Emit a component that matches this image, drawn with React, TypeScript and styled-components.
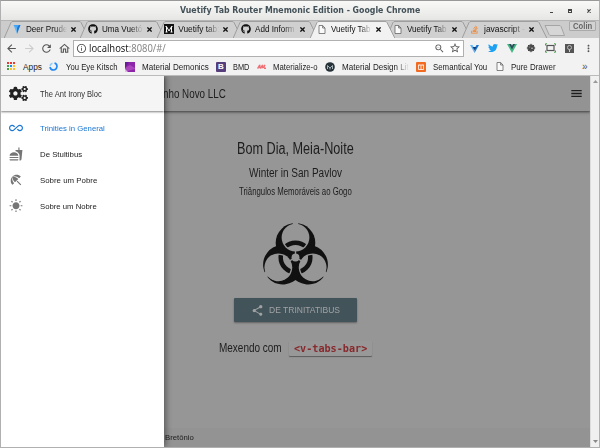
import React, { useLayoutEffect, useRef, useState } from 'react';
import styled, { createGlobalStyle } from 'styled-components';
import { FaCogs, FaGithub, FaStackOverflow, FaTwitter } from 'react-icons/fa';
import {
  MdAllInclusive, MdArrowBack, MdArrowForward, MdBeachAccess, MdFastfood, MdInfoOutline,
  MdMoreVert, MdOutlineHome, MdRefresh, MdShare, MdStarBorder, MdWbSunny, MdZoomOut,
} from 'react-icons/md';

const Global = createGlobalStyle`
  * { box-sizing: border-box; }
  body { margin: 0; overflow: hidden; font-family: "Liberation Sans", sans-serif; }
  svg { display: block; flex: none; }
`;

const FitBox = styled.span<{ $w: number }>`
  display: block; flex: none; width: ${p => p.$w}px; white-space: nowrap;
`;
const FitInner = styled.span`
  display: inline-block; transform-origin: 0 50%;
`;

/* Condenses or expands a line of text to a given width. */
function Fit({ w, children }: { w: number; children: React.ReactNode }) {
  const ref = useRef<HTMLSpanElement>(null);
  const [scale, setScale] = useState(1);
  useLayoutEffect(() => {
    if (ref.current) setScale(w / ref.current.offsetWidth);
  }, [w]);
  return (
    <FitBox $w={w}>
      <FitInner ref={ref} style={{ transform: `scaleX(${scale})` }}>{children}</FitInner>
    </FitBox>
  );
}

const Window = styled.div`
  width: 600px; height: 448px; display: flex; flex-direction: column;
  border: 1px solid #b0b0b0; border-top-color: #999; background: #f2f2f2;
`;
const TitleBar = styled.header`
  height: 19px; flex: none; display: flex; align-items: center; padding: 0 8px 0 179px;
  background: linear-gradient(#f9f9f8, #e6e6e4); color: #435158;
  font: bold 8px "DejaVu Sans", sans-serif;
`;
const WindowButtons = styled.div`
  margin-left: auto; display: flex; align-items: center; gap: 15px; color: #444;
`;
const Minimise = styled.i`width: 3px; height: 1px; margin-top: 3px; background: #444;`;
const Maximise = styled.i`width: 4px; height: 4px; border: 1px solid #444; border-top-width: 2px;`;

const TabStrip = styled.nav`
  height: 18px; flex: none; display: flex; padding-left: 3px; background: #cccccc; border-top: 1px solid #b5b5b5;
`;
const TabBox = styled.div<{ $active?: boolean }>`
  width: 76.4px; height: 17px; flex: none; display: grid; z-index: ${p => (p.$active ? 2 : 1)};
  > * { grid-area: 1 / 1; }
`;
const TabContent = styled.div`
  display: flex; align-items: center; padding: 0 0 1px 7.5px; z-index: 1; color: #111; font-size: 8.3px;
`;
const Favicon = styled.span`width: 10px; height: 10px; margin-right: 4px; display: grid; place-items: center; flex: none;`;
const TabLabel = styled.span`
  width: 42px; margin: -1px 3px 0 0; overflow: hidden; flex: none;
  mask-image: linear-gradient(90deg, #000 68%, transparent 98%);
`;
const NewTab = styled.svg`margin: 4px 0 0 5px;`;
const Profile = styled.div`
  margin: 0 3px 0 auto; width: 27px; height: 10px; border: 1px solid #aaa; border-radius: 1px;
  display: flex; justify-content: center; align-items: center; background: #d2d2d2; color: #666;
  font-size: 8.5px; font-weight: bold;
`;

const Toolbar = styled.div`
  height: 19px; flex: none; display: flex; align-items: center; padding: 1px 5px 0 4px; color: #555;
`;
const NavIcons = styled.div`width: 68px; display: flex; gap: 4.5px;`;
const Omnibox = styled.div`
  width: 391px; height: 17px; display: flex; align-items: center; gap: 2px; padding: 0 2px;
  border: 1px solid #b0b0b0; background: #fff; color: #555; font-size: 10.5px; margin-right: 6px;
  font-family: "Noto Sans", sans-serif;
`;
const Url = styled.span`color: #222; em { font-style: normal; color: #888; }`;
const OmniEnd = styled.div`margin-left: auto; display: flex; align-items: center; gap: 4px;`;
const Extensions = styled.div`flex: 1; display: flex; align-items: center; justify-content: space-between;`;

const Bookmarks = styled.div`
  height: 19px; flex: none; display: grid; align-items: center; padding: 1px 0 0 6px;
  grid-template-columns: 42px 76px 91px 41px 68px 91px 80px 86px auto;
  border-bottom: 1px solid #bbb; color: #222; font-size: 8.3px;
`;
const Bookmark = styled.div`display: flex; align-items: center;`;
const BookmarkIcon = styled.span<{ $w: number }>`width: ${p => p.$w}px; height: 10px; flex: none; display: flex; align-items: center;`;
const Faded = styled.span`mask-image: linear-gradient(90deg, #000 80%, transparent);`;
const Overflow = styled.span`color: #555; font-size: 10px;`;
const Square = styled.i<{ $bg: string }>`
  width: 10px; height: 10px; border-radius: 1px; background: ${p => p.$bg}; color: #fff;
  font: bold 8px/10px "Liberation Sans", sans-serif; text-align: center;
`;

const Viewport = styled.div`flex: 1; min-height: 0; display: grid; grid-template-columns: 1fr 9px;`;
const Page = styled.main`
  position: relative; overflow: hidden; display: flex; flex-direction: column; background: #969696; color: #1d1d1d;
`;
const AppBar = styled.div`
  height: 35px; flex: none; display: flex; align-items: center; justify-content: space-between;
  padding: 0 8px 0 162px; background: #939393; font-size: 12px;
  box-shadow: 0 1px 2px rgba(0,0,0,.45), 0 2px 3px rgba(0,0,0,.15);
`;
const Content = styled.section`flex: 1; display: flex; flex-direction: column; align-items: center; padding-top: 25px;`;
const Heading = styled.h1<{ $size: number; $h: number }>`
  margin: 0; font-weight: 400; font-size: ${p => p.$size}px; height: ${p => p.$h}px; line-height: ${p => p.$h}px;
`;
const HazardSvg = styled.svg`margin-top: 25px;`;
const Cta = styled.button`
  width: 123px; height: 24px; margin-top: 13px; padding: 0 0 0 17px; display: flex; flex: none; align-items: center; gap: 5px;
  border: 0; border-radius: 1px; background: #43535a; color: #a0a3a4; font: 9px "Liberation Sans", sans-serif;
  box-shadow: 0 1px 2px rgba(0,0,0,.35);
`;
const Mixing = styled.p`
  margin: 19px 0 0; display: flex; align-items: center; gap: 7px; font-size: 12.5px; line-height: 15px;
`;
const Code = styled.code`
  width: 83px; height: 15px; padding-left: 5px; border-radius: 1px; background: #989898; color: #87292d;
  font: bold 10px/16px "DejaVu Sans Mono", monospace; box-shadow: 0 1px 1px rgba(0,0,0,.4);
`;
const Footer = styled.footer`
  height: 19px; flex: none; padding-left: 163.5px; display: flex; align-items: center; background: #939393; font-size: 8px;
`;
const Drawer = styled.aside`
  position: absolute; left: 0; top: 0; bottom: 0; width: 162.5px; background: #fff;
  box-shadow: 2px 0 6px rgba(0,0,0,.4);
`;
const DrawerHead = styled.div`
  height: 35px; display: flex; align-items: center; padding-left: 8px; gap: 12px; background: #f5f5f5;
  color: #333; font-size: 9.5px; box-shadow: 0 1px 2px rgba(0,0,0,.5);
  svg { color: #222; }
`;
const Items = styled.ul`margin: 0; padding: 4px 0 0; list-style: none;`;
const Item = styled.li<{ $active?: boolean }>`
  height: 26px; display: flex; align-items: center; gap: 17px; padding-left: 8px; font-size: 8px;
  color: ${p => (p.$active ? '#1976d2' : '#222')};
  svg { color: ${p => (p.$active ? '#1976d2' : '#757575')}; }
`;
const Scrollbar = styled.div`
  display: flex; flex-direction: column; justify-content: space-between; align-items: center;
  padding: 4px 0; background: #f0f0f0; border-left: 1px solid #ddd;
`;

const Cross = ({ size = 5, weight = 1.3 }: { size?: number; weight?: number }) => (
  <svg width={size} height={size} viewBox="0 0 5 5" stroke="currentColor" strokeWidth={weight}>
    <path d="M.4.4l4.200 4.200M4.600.4L.4 4.600" />
  </svg>
);
const MenuBars = () => (
  <svg width="11" height="9" viewBox="0 0 11 9" stroke="#1d1d1d" strokeWidth="1.300">
    <path d="M.3 1.700h10.400M.3 4.500h10.400M.3 7.300h10.400" />
  </svg>
);

/* Three crescents around a pierced centre, with an interrupted ring. */
const spokes = [0, 120, 240];
const Biohazard = () => (
  <HazardSvg width="65" height="62" viewBox="-24.6 -26 49.2 46.8" fill="#111">
    <defs>
      <mask id="crescents" maskUnits="userSpaceOnUse" x="-30" y="-30" width="60" height="60">
        <rect x="-30" y="-30" width="60" height="60" fill="#fff" />
        {spokes.map(a => (
          <g key={a} transform={`rotate(${a})`}>
            <circle cy="-15" r="10.5" fill="#000" />
            <rect x="-2" y="-28" width="4" height="8" fill="#000" />
            <rect x="-.5" y="-7" width="1" height="7" fill="#000" />
          </g>
        ))}
        <circle r="3" fill="#000" />
      </mask>
      <clipPath id="openings">
        {spokes.map(a => <circle key={a} cy="-15" r="9.5" transform={`rotate(${a})`} />)}
      </clipPath>
    </defs>
    <g mask="url(#crescents)">
      {spokes.map(a => <circle key={a} cy="-11" r="15" transform={`rotate(${a})`} />)}
    </g>
    <g clipPath="url(#openings)"><circle r="11.2" fill="none" stroke="#111" strokeWidth="3.4" /></g>
  </HazardSvg>
);

const PageIcon = () => (
  <svg width="8" height="9" viewBox="0 0 8 9" fill="#fafafa" stroke="#666" strokeWidth=".8">
    <path d="M1 .5h3.6L7 3v5.5H1zM4.6.5V3H7" />
  </svg>
);
const VuetifyIcon = ({ ext }: { ext?: boolean }) => ext ? (
  <svg width="9" height="9" viewBox="0 0 9 9">
    <path d="M0 1h2.500l2 3.500V9z" fill="#64b5f6" /><path d="M9 1H6.500l-2 3.500V9z" fill="#1976d2" /><path d="M2.500 3h4l-2 3z" fill="#123f75" />
  </svg>
) : (
  <svg width="10" height="10" viewBox="0 0 10 10">
    <path d="M1.500 1l3.500 9V1z" fill="#64b5f6" /><path d="M5 10V1h3.500z" fill="#1976d2" /><path d="M1.500 1H7L5 4z" fill="#42a5f5" />
  </svg>
);
const Medium = () => (
  <svg width="10" height="10" viewBox="0 0 10 10">
    <path d="M0 0h10v10H0z" fill="#111" />
    <path d="M2.500 8V2.500L5 7l2.500-4.500V8M1.500 8h2M6.500 8h2M1.500 2.500h1M7.500 2.500h1" fill="none" stroke="#fff" strokeWidth="1" />
  </svg>
);
const AppsIcon = () => (
  <svg width="9" height="9" viewBox="0 0 9 9">
    {['#e53935', '#e53935', '#e53935', '#43a047', '#1e88e5', '#fbc02d', '#43a047', '#fbc02d', '#fbc02d'].map((c, i) => (
      <rect key={i} x={(i % 3) * 3} y={Math.floor(i / 3) * 3} width="2" height="2" fill={c} />
    ))}
  </svg>
);
const RingIcon = () => (
  <svg width="9" height="9" viewBox="0 0 9 9" fill="none" strokeWidth="1.6">
    <path d="M5.500 1.100A3.500 3.500 0 1 1 1 5" stroke="#1e88f5" />
    <path d="M1 3.800A3.500 3.500 0 0 1 3.500 1.200" stroke="#90caf9" />
  </svg>
);
const PurpleIcon = () => (
  <svg width="10" height="10" viewBox="0 0 10 10">
    <path d="M0 0h10v10H0z" fill="#8e24aa" /><path d="M0 10V6l5-3 5 3v1l-4 1z" fill="#ab47bc" /><path d="M0 10V7l3 3z" fill="#e1bee7" /><path d="M0 0h4L0 6z" fill="#6a1b9a" />
  </svg>
);
const MaterializeIcon = () => (
  <svg width="9" height="5" viewBox="0 0 9 5" fill="none" stroke="#ee6e73" strokeWidth="1.400">
    <path d="M.6 4.600L2.800.8M2.800.8v3.500M3.400 4.600L5.600.8M5.600.8v3.500M6.500 4L8 .8M7 4.300h2" />
  </svg>
);
const MdbIcon = () => (
  <svg width="10" height="10" viewBox="0 0 10 10">
    <circle cx="5" cy="5" r="4.8" fill="#263238" /><path d="M2.500 7V3.500L5 6l2.500-2.500V7M5 6v1.500" fill="none" stroke="#b0bec5" strokeWidth=".9" />
  </svg>
);
const SemanticIcon = () => (
  <svg width="10" height="10" viewBox="0 0 10 10">
    <rect width="10" height="10" rx="1" fill="#f26b21" /><path d="M2.500 3h5v4.500h-5zM5 3v4.500M3 2.500v1M7 2.500v1" fill="none" stroke="#fff" strokeWidth=".8" />
  </svg>
);
const FrogIcon = () => (
  <svg width="10" height="10" viewBox="0 0 10 10">
    <circle cx="5" cy="5" r="3.6" fill="#555" /><path d="M5 .8v8.400M.8 5h8.400M2 2l6 6M8 2L2 8" stroke="#444" />
    <circle cx="6" cy="5.200" r=".8" fill="#ccc" /><circle cx="3.800" cy="4" r=".6" fill="#aaa" />
  </svg>
);
const FrameIcon = () => (
  <svg width="11" height="10" viewBox="0 0 11 10" fill="none">
    <rect x="2" y="2.500" width="7" height="5" stroke="#555" strokeWidth="1.200" />
    <path d="M.5 2.500V.8h1.500M9 .8h1.500v1.700M.5 7.500v1.700H2M9 9.200h1.500V7.500" stroke="#43a047" />
  </svg>
);
const LampIcon = () => (
  <svg width="9" height="9" viewBox="0 0 9 9">
    <path d="M0 0h9v9H0z" fill="#555" /><circle cx="4.500" cy="3.500" r="2" fill="none" stroke="#bbb" /><path d="M4.500 5.500v2.500" stroke="#ccc" />
  </svg>
);

const tabs = [
  { label: 'Deer Prude', icon: <VuetifyIcon />, w: 41 },
  { label: 'Uma Vuetó', icon: <FaGithub size={10} />, w: 40 },
  { label: 'Vuetify tab:', icon: <Medium />, w: 41 },
  { label: 'Add Inform', icon: <FaGithub size={10} />, w: 40 },
  { label: 'Vuetify Tab', icon: <PageIcon />, w: 40, active: true },
  { label: 'Vuetify Tab', icon: <PageIcon />, w: 40 },
  { label: 'javascript -', icon: <FaStackOverflow size={9} color="#f48024" />, w: 41 },
];

const bookmarks = [
  { label: 'Apps', icon: <AppsIcon />, gap: 16, w: 19 },
  { label: 'You Eye Kitsch', icon: <RingIcon />, gap: 17, w: 52 },
  { label: 'Material Demonics', icon: <PurpleIcon />, gap: 17, w: 67 },
  { label: 'BMD', icon: <Square $bg="#563d7c">B</Square>, gap: 17, w: 16 },
  { label: 'Materialize-o', icon: <MaterializeIcon />, gap: 16, w: 45 },
  { label: 'Material Design Lit', icon: <MdbIcon />, gap: 17, w: 67, faded: true },
  { label: 'Semantical You', icon: <SemanticIcon />, gap: 17, w: 54 },
  { label: 'Pure Drawer', icon: <PageIcon />, gap: 15, w: 45 },
];

const items = [
  { label: 'Trinities in General', Icon: MdAllInclusive, w: 65, active: true },
  { label: 'De Stultibus', Icon: MdFastfood, w: 42 },
  { label: 'Sobre um Pobre', Icon: MdBeachAccess, w: 57 },
  { label: 'Sobre um Nobre', Icon: MdWbSunny, w: 57 },
];

export default function App() {
  return (
    <>
      <Global />
      <Window>
        <TitleBar>
          <Fit w={240}>Vuetify Tab Router Mnemonic Edition - Google Chrome</Fit>
          <WindowButtons><Minimise /><Maximise /><Cross size={4} weight={1.5} /></WindowButtons>
        </TitleBar>
        <TabStrip>
          {tabs.map((t, i) => (
            <TabBox key={i} $active={t.active}>
              <svg width="86" height="17" viewBox="0 0 86 17">
                <path d="M0 17.500L7 1.500Q7.500.5 9 .5H75Q76.500.5 77 1.500L85 17.500" fill={t.active ? '#f2f2f2' : '#d0d0d0'} stroke="#999" strokeWidth=".9" />
              </svg>
              <TabContent>
                <Favicon>{t.icon}</Favicon>
                <TabLabel><Fit w={t.w}>{t.label}</Fit></TabLabel>
                <Cross />
              </TabContent>
            </TabBox>
          ))}
          <NewTab width="22" height="11" viewBox="0 0 22 11">
            <path d="M1 .5h14q1.500 0 2 1l3.500 9H7q-1.500 0-2-1z" fill="#d6d6d6" stroke="#a5a5a5" />
          </NewTab>
          <Profile><Fit w={19}>Colin</Fit></Profile>
        </TabStrip>
        <Toolbar>
          <NavIcons>
            <MdArrowBack size={13} /><MdArrowForward size={13} color="#ccc" /><MdRefresh size={13} /><MdOutlineHome size={13} />
          </NavIcons>
          <Omnibox>
            <MdInfoOutline size={11} />
            <Url><Fit w={77}>localhost<em>:8080/#/</em></Fit></Url>
            <OmniEnd><MdZoomOut size={11} /><MdStarBorder size={12} /></OmniEnd>
          </Omnibox>
          <Extensions>
            <VuetifyIcon ext /><FaTwitter size={10} color="#1da1f2" />
            <svg width="10" height="9" viewBox="0 0 10 9"><path d="M0 0l5 9 5-9H6L5 2 4 0z" fill="#41b883" /><path d="M2 0l3 5.500L8 0H6L5 2 4 0z" fill="#35495e" /></svg>
            <FrogIcon /><FrameIcon /><LampIcon /><MdMoreVert size={11} />
          </Extensions>
        </Toolbar>
        <Bookmarks>
          {bookmarks.map(b => (
            <Bookmark key={b.label}>
              <BookmarkIcon $w={b.gap}>{b.icon}</BookmarkIcon>
              {b.faded ? <Faded><Fit w={b.w}>{b.label}</Fit></Faded> : <Fit w={b.w}>{b.label}</Fit>}
            </Bookmark>
          ))}
          <Overflow>»</Overflow>
        </Bookmarks>
        <Viewport>
          <Page>
            <AppBar>
              <Fit w={63}>nho Novo LLC</Fit>
              <MenuBars />
            </AppBar>
            <Content>
              <Heading $size={16} $h={25}><Fit w={117}>Bom Dia, Meia-Noite</Fit></Heading>
              <Heading as="h2" $size={12.5} $h={24}><Fit w={93}>Winter in San Pavlov</Fit></Heading>
              <Heading as="h3" $size={10} $h={13}><Fit w={113}>Triângulos Memoráveis ao Gogo</Fit></Heading>
              <Biohazard />
              <Cta><MdShare size={13} /><Fit w={71}>DE TRINITATIBUS</Fit></Cta>
              <Mixing><Fit w={63}>Mexendo com</Fit><Code><Fit w={73}>&lt;v-tabs-bar&gt;</Fit></Code></Mixing>
            </Content>
            <Footer><Fit w={29}>Bretônio</Fit></Footer>
            <Drawer>
              <DrawerHead><FaCogs size={19} /><Fit w={62}>The Ant Irony Bloc</Fit></DrawerHead>
              <Items>
                {items.map(({ label, Icon, w, active }) => (
                  <Item key={label} $active={active}><Icon size={14} /><Fit w={w}>{label}</Fit></Item>
                ))}
              </Items>
            </Drawer>
          </Page>
          <Scrollbar>
            <svg width="5" height="3" viewBox="0 0 5 3"><path d="M0 3L2.500 0 5 3z" fill="#999" /></svg>
            <svg width="5" height="3" viewBox="0 0 5 3"><path d="M0 0l2.500 3L5 0z" fill="#888" /></svg>
          </Scrollbar>
        </Viewport>
      </Window>
    </>
  );
}
